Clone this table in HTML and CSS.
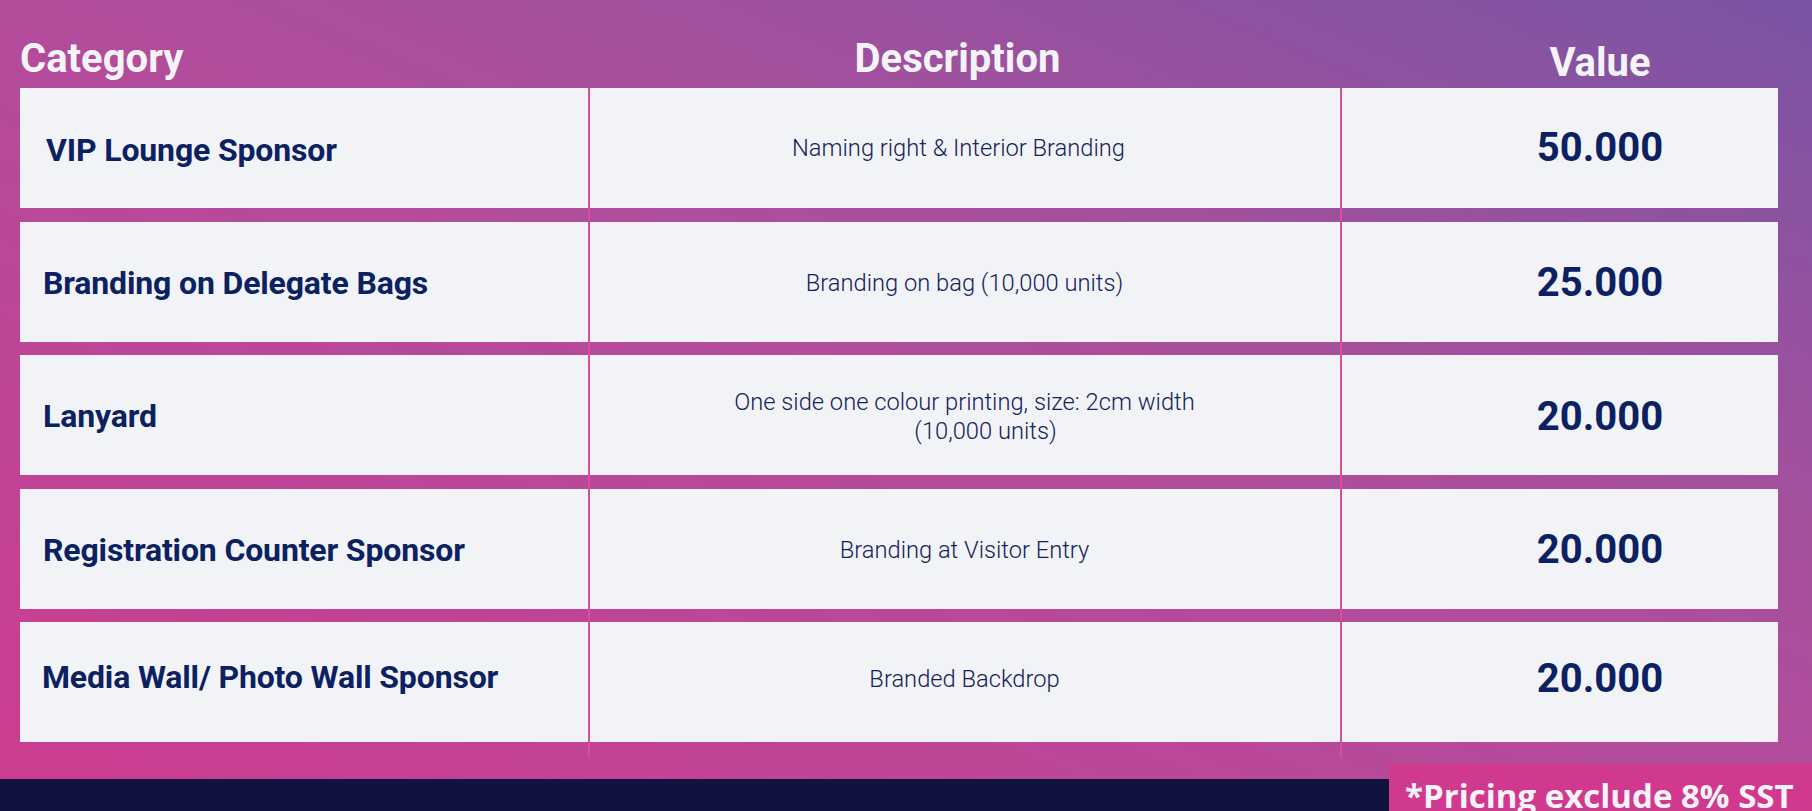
FILE: index.html
```html
<!DOCTYPE html>
<html lang="en">
<head>
<meta charset="utf-8">
<title>Sponsorship Pricing</title>
<link rel="stylesheet" href="styles.css">
</head>
<body>
<div class="slide">
  <div class="panel">
    <div class="head">
      <div class="h-cat">Category</div>
      <div class="h-desc">Description</div>
      <div class="h-val">Value</div>
    </div>
    <div class="table">
      <div class="row">
        <div class="cat cat-first">VIP Lounge Sponsor</div>
        <div class="desc desc-first">Naming right &amp; Interior Branding</div>
        <div class="val val-first">50.000</div>
      </div>
      <div class="row">
        <div class="cat">Branding on Delegate Bags</div>
        <div class="desc">Branding on bag (10,000 units)</div>
        <div class="val">25.000</div>
      </div>
      <div class="row">
        <div class="cat">Lanyard</div>
        <div class="desc">One side one colour printing, size: 2cm width<br><span class="desc-second">(10,000 units)</span></div>
        <div class="val">20.000</div>
      </div>
      <div class="row">
        <div class="cat">Registration Counter Sponsor</div>
        <div class="desc">Branding at Visitor Entry</div>
        <div class="val">20.000</div>
      </div>
      <div class="row row-last">
        <div class="cat cat-last">Media Wall/ Photo Wall Sponsor</div>
        <div class="desc">Branded Backdrop</div>
        <div class="val">20.000</div>
      </div>
      <div class="rule rule-1"></div>
      <div class="rule rule-2"></div>
    </div>
  </div>
  <div class="footer"></div>
  <div class="badge">*Pricing exclude 8% SST</div>
</div>
</body>
</html>
```

FILE: styles.css
```css
* {
  box-sizing: border-box;
}

html, body {
  margin: 0;
  padding: 0;
}

body {
  font-family: Roboto, "Liberation Sans", sans-serif;
  background: #10123f;
}

.slide {
  position: relative;
  width: 1812px;
  height: 811px;
  overflow: hidden;
}

.panel {
  height: 779px;
  padding-left: 20px;
  background: linear-gradient(to top right,
    #cc3d91 0%,
    #b24c9b 50%,
    #a6509d 65%,
    #8f52a0 83%,
    #7954a3 100%);
}

.head {
  display: grid;
  grid-template-columns: 569px 751px 438px;
  height: 88px;
  color: #f4f4f8;
  font-weight: 700;
  font-size: 40px;
  line-height: 40px;
}

.h-cat {
  padding-top: 39px;
}

.h-desc {
  padding-top: 39px;
  padding-right: 14px;
  text-align: center;
}

.h-val {
  padding-top: 43px;
  padding-left: 82px;
  text-align: center;
}

.table {
  position: relative;
  width: 1758px;
  display: flex;
  flex-direction: column;
  gap: 13.5px;
}

.row {
  display: grid;
  grid-template-columns: 569px 751px 438px;
  height: 120px;
  align-items: center;
  background: #f2f3f7;
}

.row-last {
  padding-bottom: 10px;
}

.cat {
  padding-left: 23px;
  padding-top: 2px;
  font-size: 32px;
  font-weight: 700;
  letter-spacing: -0.15px;
  color: #0b2161;
}

.cat-first {
  padding-left: 26px;
  padding-top: 3px;
}

.cat-last {
  padding-left: 22px;
  padding-top: 0;
}

.desc {
  padding-top: 4px;
  text-align: center;
  font-size: 23.7px;
  line-height: 29px;
  font-weight: 300;
  color: #14225a;
}

.desc-first {
  padding-top: 0;
  padding-right: 12px;
}

.desc-second {
  display: inline-block;
  padding-left: 42px;
}

.val {
  padding-left: 82px;
  padding-top: 2px;
  text-align: center;
  font-size: 40px;
  font-weight: 700;
  color: #0b2161;
}

.val-first {
  padding-top: 0;
  padding-bottom: 2px;
}

.rule {
  position: absolute;
  top: 0;
  bottom: -16px;
  width: 2px;
  background: #dc4c9d;
}

.rule-1 {
  left: 568px;
}

.rule-2 {
  left: 1320px;
}

.footer {
  height: 32px;
  background: #10123f;
}

.badge {
  position: absolute;
  right: 0;
  bottom: 0;
  width: 423px;
  height: 47px;
  padding-left: 16px;
  padding-top: 14px;
  background: #d1398f;
  color: #f4f4f8;
  font-family: "Open Sans", "Liberation Sans", sans-serif;
  font-weight: 700;
  font-size: 33px;
  line-height: 36px;
  white-space: nowrap;
}
```
